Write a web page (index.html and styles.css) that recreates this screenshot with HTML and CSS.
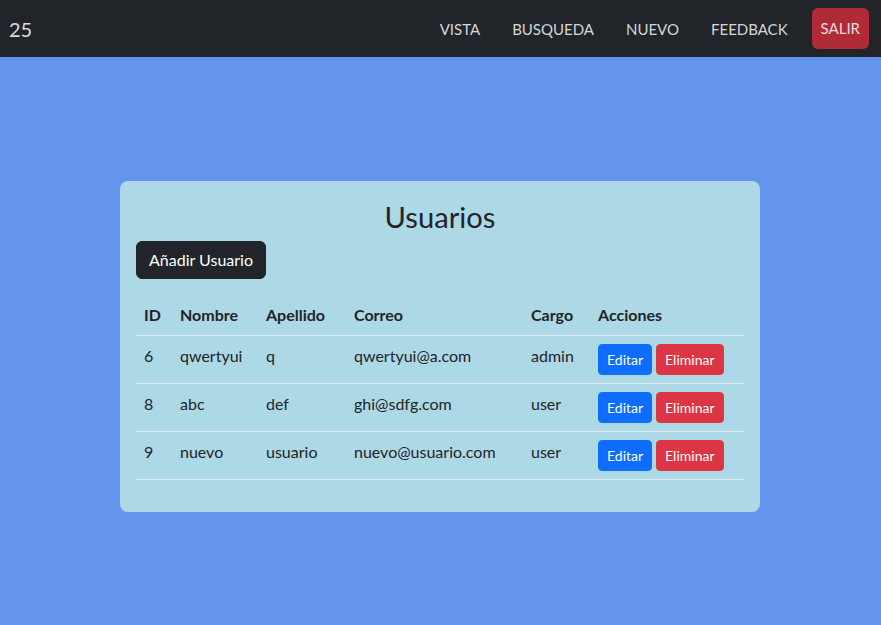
FILE: index.html
```html
<!DOCTYPE html>
<html lang="es">
<head>
<meta charset="utf-8">
<title>Usuarios</title>
<link rel="stylesheet" href="styles.css">
</head>
<body>
<nav class="navbar">
  <a class="brand" href="#">25</a>
  <ul class="nav">
    <li><a class="nav-link" href="#">VISTA</a></li>
    <li><a class="nav-link" href="#">BUSQUEDA</a></li>
    <li><a class="nav-link" href="#">NUEVO</a></li>
    <li><a class="nav-link" href="#">FEEDBACK</a></li>
    <li><a class="btn-salir" href="#">SALIR</a></li>
  </ul>
</nav>
<main class="main">
  <section class="card">
    <h2 class="title">Usuarios</h2>
    <div class="toolbar"><button class="btn btn-dark">Añadir Usuario</button></div>
    <table class="table">
      <thead>
        <tr>
          <th class="c-id">ID</th>
          <th class="c-nombre">Nombre</th>
          <th class="c-apellido">Apellido</th>
          <th class="c-correo">Correo</th>
          <th class="c-cargo">Cargo</th>
          <th class="c-acciones">Acciones</th>
        </tr>
      </thead>
      <tbody>
        <tr>
          <td>6</td><td>qwertyui</td><td>q</td><td>qwertyui@a.com</td><td>admin</td>
          <td><div class="actions"><button class="btn-sm btn-primary">Editar</button><button class="btn-sm btn-danger">Eliminar</button></div></td>
        </tr>
        <tr>
          <td>8</td><td>abc</td><td>def</td><td>ghi@sdfg.com</td><td>user</td>
          <td><div class="actions"><button class="btn-sm btn-primary">Editar</button><button class="btn-sm btn-danger">Eliminar</button></div></td>
        </tr>
        <tr>
          <td>9</td><td>nuevo</td><td>usuario</td><td>nuevo@usuario.com</td><td>user</td>
          <td><div class="actions"><button class="btn-sm btn-primary">Editar</button><button class="btn-sm btn-danger">Eliminar</button></div></td>
        </tr>
      </tbody>
    </table>
  </section>
</main>
</body>
</html>
```

FILE: styles.css
```css
* { box-sizing: border-box; }
html, body { margin: 0; padding: 0; }
body {
  font-family: "Lato", "Open Sans", sans-serif;
  font-size: 16px;
  line-height: 1.5;
  color: #212529;
  background: #6495ed;
  min-height: 625px;
}
.navbar {
  height: 57px;
  background: #212529;
  display: flex;
  align-items: center;
  justify-content: space-between;
  padding: 0 12px 0 9px;
}
.brand {
  color: rgba(255,255,255,0.85);
  font-size: 20px;
  text-decoration: none;
  line-height: 30px;
}
.nav {
  list-style: none;
  margin: 0;
  padding: 0;
  display: flex;
  align-items: center;
}
.nav-link {
  display: block;
  padding: 8px 16px;
  color: rgba(255,255,255,0.82);
  text-decoration: none;
  font-size: 15px;
  line-height: 24px;
}
.btn-salir {
  display: flex;
  align-items: center;
  height: 41px;
  padding: 0 9px;
  margin-left: 8px;
  background: #b02a37;
  color: rgba(255,255,255,0.85);
  border-radius: 6px;
  text-decoration: none;
  font-size: 15px;
}
.main {
  padding: 124px 121px 0 120px;
}
.card {
  width: 640px;
  background: #add8e6;
  border-radius: 8px;
  padding: 18px 16px 16px;
}
.title {
  margin: 0 0 7px;
  text-align: center;
  font-size: 29.13px;
  font-weight: 400;
  line-height: 35px;
}
.toolbar { display: flex; }
.btn {
  font-family: inherit;
  font-size: 16px;
  line-height: 24px;
  padding: 6px 12px;
  border: 1px solid transparent;
  border-radius: 6px;
  cursor: pointer;
}
.btn-dark { background: #212529; color: #fff; border-color: #212529; }
.table {
  width: 100%;
  margin: 16px 0 16px;
  border-collapse: collapse;
  table-layout: fixed;
}
.table th, .table td {
  padding: 8px;
  text-align: left;
  vertical-align: top;
  border-bottom: 1px solid #d5e9ef;
  white-space: nowrap;
}
.table th { font-weight: 700; }
.c-id { width: 36px; }
.c-nombre { width: 86px; }
.c-apellido { width: 88px; }
.c-correo { width: 177px; }
.c-cargo { width: 67px; }
.actions { display: flex; gap: 4px; }
.btn-sm {
  font-family: inherit;
  font-size: 14px;
  line-height: 21px;
  padding: 4px 8px;
  border: 1px solid transparent;
  border-radius: 4px;
  color: #fff;
  cursor: pointer;
}
.btn-primary { background: #0d6efd; border-color: #0d6efd; }
.btn-danger { background: #dc3545; border-color: #dc3545; }
```
